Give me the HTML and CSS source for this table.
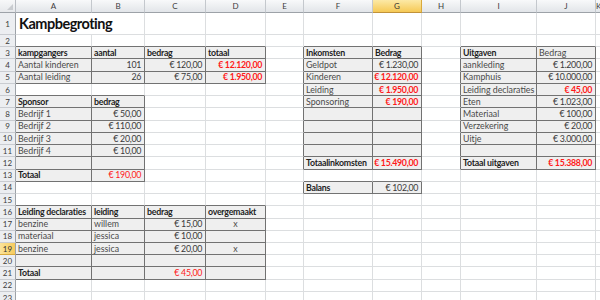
FILE: index.html
```html
<!DOCTYPE html>
<html lang="nl">
<head>
<meta charset="utf-8">
<title>Kampbegroting</title>
<link rel="stylesheet" href="styles.css">
</head>
<body>
<div class="sheet">
  <!-- column headers -->
  <div class="corner"><span class="tri"></span></div>
  <div class="h">A</div><div class="h">B</div><div class="h">C</div><div class="h">D</div><div class="h">E</div>
  <div class="h">F</div><div class="h hs">G</div><div class="h">H</div><div class="h">I</div><div class="h">J</div><div class="h">K</div>

  <!-- row 1 -->
  <div class="r">1</div>
  <div class="c title">Kampbegroting</div>
  <div class="c"></div><div class="c"></div><div class="c"></div><div class="c"></div><div class="c"></div><div class="c"></div><div class="c"></div><div class="c"></div><div class="c"></div>

  <!-- row 2 -->
  <div class="r">2</div>
  <div class="c eb"></div><div class="c eb"></div><div class="c eb"></div><div class="c eb"></div>
  <div class="c"></div><div class="c eb"></div><div class="c eb"></div><div class="c"></div><div class="c eb"></div><div class="c eb"></div><div class="c"></div>

  <!-- row 3 -->
  <div class="r">3</div>
  <div class="c d b">kampgangers</div><div class="c d b">aantal</div><div class="c d b">bedrag</div><div class="c d b">totaal</div>
  <div class="c er"></div>
  <div class="c d b">Inkomsten</div><div class="c d b">Bedrag</div>
  <div class="c er"></div>
  <div class="c d b">Uitgaven</div><div class="c d">Bedrag</div>
  <div class="c"></div>

  <!-- row 4 -->
  <div class="r">4</div>
  <div class="c d">Aantal kinderen</div><div class="c d n">101</div><div class="c d n">€&nbsp;120,00</div><div class="c d n red b">€&nbsp;12.120,00</div>
  <div class="c er"></div>
  <div class="c d">Geldpot</div><div class="c d n">€&nbsp;1.230,00</div>
  <div class="c er"></div>
  <div class="c d">aankleding</div><div class="c d n">€&nbsp;1.200,00</div>
  <div class="c"></div>

  <!-- row 5 -->
  <div class="r">5</div>
  <div class="c d">Aantal leiding</div><div class="c d n">26</div><div class="c d n">€&nbsp;75,00</div><div class="c d n red b">€&nbsp;1.950,00</div>
  <div class="c er"></div>
  <div class="c d">Kinderen</div><div class="c d n red b">€&nbsp;12.120,00</div>
  <div class="c er"></div>
  <div class="c d">Kamphuis</div><div class="c d n">€&nbsp;10.000,00</div>
  <div class="c"></div>

  <!-- row 6 -->
  <div class="r">6</div>
  <div class="c eb"></div><div class="c eb"></div><div class="c"></div><div class="c"></div>
  <div class="c er"></div>
  <div class="c d">Leiding</div><div class="c d n red b">€&nbsp;1.950,00</div>
  <div class="c er"></div>
  <div class="c d">Leiding declaraties</div><div class="c d n red b">€&nbsp;45,00</div>
  <div class="c"></div>

  <!-- row 7 -->
  <div class="r">7</div>
  <div class="c d b">Sponsor</div><div class="c d b">bedrag</div><div class="c"></div><div class="c"></div>
  <div class="c er"></div>
  <div class="c d">Sponsoring</div><div class="c d n red b">€&nbsp;190,00</div>
  <div class="c er"></div>
  <div class="c d">Eten</div><div class="c d n">€&nbsp;1.023,00</div>
  <div class="c"></div>

  <!-- row 8 -->
  <div class="r">8</div>
  <div class="c d">Bedrijf 1</div><div class="c d n">€&nbsp;50,00</div><div class="c"></div><div class="c"></div>
  <div class="c er"></div>
  <div class="c d"></div><div class="c d"></div>
  <div class="c er"></div>
  <div class="c d">Materiaal</div><div class="c d n">€&nbsp;100,00</div>
  <div class="c"></div>

  <!-- row 9 -->
  <div class="r">9</div>
  <div class="c d">Bedrijf 2</div><div class="c d n">€&nbsp;110,00</div><div class="c"></div><div class="c"></div>
  <div class="c er"></div>
  <div class="c d"></div><div class="c d"></div>
  <div class="c er"></div>
  <div class="c d">Verzekering</div><div class="c d n">€&nbsp;20,00</div>
  <div class="c"></div>

  <!-- row 10 -->
  <div class="r">10</div>
  <div class="c d">Bedrijf 3</div><div class="c d n">€&nbsp;20,00</div><div class="c"></div><div class="c"></div>
  <div class="c er"></div>
  <div class="c d"></div><div class="c d"></div>
  <div class="c er"></div>
  <div class="c d">Uitje</div><div class="c d n">€&nbsp;3.000,00</div>
  <div class="c"></div>

  <!-- row 11 -->
  <div class="r">11</div>
  <div class="c d">Bedrijf 4</div><div class="c d n">€&nbsp;10,00</div><div class="c"></div><div class="c"></div>
  <div class="c er"></div>
  <div class="c d"></div><div class="c d"></div>
  <div class="c er"></div>
  <div class="c d"></div><div class="c d"></div>
  <div class="c"></div>

  <!-- row 12 -->
  <div class="r">12</div>
  <div class="c d"></div><div class="c d"></div><div class="c"></div><div class="c"></div>
  <div class="c er"></div>
  <div class="c d b">Totaalinkomsten</div><div class="c d n red b">€&nbsp;15.490,00</div>
  <div class="c er"></div>
  <div class="c d b">Totaal uitgaven</div><div class="c d n red b">€&nbsp;15.388,00</div>
  <div class="c"></div>

  <!-- row 13 -->
  <div class="r">13</div>
  <div class="c d b">Totaal</div><div class="c d n red">€&nbsp;190,00</div><div class="c"></div><div class="c"></div>
  <div class="c"></div>
  <div class="c eb"></div><div class="c eb"></div>
  <div class="c"></div><div class="c"></div><div class="c"></div><div class="c"></div>

  <!-- row 14 -->
  <div class="r">14</div>
  <div class="c"></div><div class="c"></div><div class="c"></div><div class="c"></div>
  <div class="c er"></div>
  <div class="c d b">Balans</div><div class="c d n">€&nbsp;102,00</div>
  <div class="c"></div><div class="c"></div><div class="c"></div><div class="c"></div>

  <!-- row 15 -->
  <div class="r">15</div>
  <div class="c eb"></div><div class="c eb"></div><div class="c eb"></div><div class="c eb"></div>
  <div class="c"></div><div class="c"></div><div class="c"></div><div class="c"></div><div class="c"></div><div class="c"></div><div class="c"></div>

  <!-- row 16 -->
  <div class="r">16</div>
  <div class="c d b">Leiding declaraties</div><div class="c d b">leiding</div><div class="c d b">bedrag</div><div class="c d b">overgemaakt</div>
  <div class="c"></div><div class="c"></div><div class="c"></div><div class="c"></div><div class="c"></div><div class="c"></div><div class="c"></div>

  <!-- row 17 -->
  <div class="r">17</div>
  <div class="c d">benzine</div><div class="c d">willem</div><div class="c d n">€&nbsp;15,00</div><div class="c d ctr">x</div>
  <div class="c"></div><div class="c"></div><div class="c"></div><div class="c"></div><div class="c"></div><div class="c"></div><div class="c"></div>

  <!-- row 18 -->
  <div class="r">18</div>
  <div class="c d">materiaal</div><div class="c d">jessica</div><div class="c d n">€&nbsp;10,00</div><div class="c d ctr"></div>
  <div class="c"></div><div class="c"></div><div class="c"></div><div class="c"></div><div class="c"></div><div class="c"></div><div class="c"></div>

  <!-- row 19 -->
  <div class="r rs">19</div>
  <div class="c d">benzine</div><div class="c d">jessica</div><div class="c d n">€&nbsp;20,00</div><div class="c d ctr">x</div>
  <div class="c"></div><div class="c"></div><div class="c"></div><div class="c"></div><div class="c"></div><div class="c"></div><div class="c"></div>

  <!-- row 20 -->
  <div class="r">20</div>
  <div class="c d"></div><div class="c d"></div><div class="c d"></div><div class="c d"></div>
  <div class="c"></div><div class="c"></div><div class="c"></div><div class="c"></div><div class="c"></div><div class="c"></div><div class="c"></div>

  <!-- row 21 -->
  <div class="r">21</div>
  <div class="c d b">Totaal</div><div class="c d"></div><div class="c d n red">€&nbsp;45,00</div><div class="c d"></div>
  <div class="c"></div><div class="c"></div><div class="c"></div><div class="c"></div><div class="c"></div><div class="c"></div><div class="c"></div>

  <!-- row 22 -->
  <div class="r">22</div>
  <div class="c"></div><div class="c"></div><div class="c"></div><div class="c"></div><div class="c"></div><div class="c"></div><div class="c"></div><div class="c"></div><div class="c"></div><div class="c"></div><div class="c"></div>

  <!-- row 23 -->
  <div class="r">23</div>
  <div class="c"></div><div class="c"></div><div class="c"></div><div class="c"></div><div class="c"></div><div class="c"></div><div class="c"></div><div class="c"></div><div class="c"></div><div class="c"></div><div class="c"></div>
</div>
</body>
</html>
```

FILE: styles.css
```css
html, body {
  margin: 0;
  padding: 0;
  background: #ffffff;
  overflow: hidden;
}

.sheet {
  width: 600px;
  height: 300px;
  overflow: hidden;
  display: grid;
  grid-template-columns: 16px 76px 53px 61px 60px 38px 69px 49px 39px 76px 59px 1fr;
  grid-template-rows: 13px 22px repeat(22, 12.24px);
  font-family: "Lato", "Open Sans", sans-serif;
  font-size: 8.8px;
  color: #4a4a4a;
}

.sheet > div {
  box-sizing: border-box;
  min-width: 0;
  white-space: nowrap;
  overflow: hidden;
}

/* corner */
.corner {
  background: linear-gradient(#f7f8f9, #e6e8eb);
  border-right: 1px solid #b9bdc3;
  border-bottom: 1px solid #9da2a8;
  display: flex;
  align-items: flex-end;
  justify-content: flex-end;
  padding: 0 2px 2px 0;
}
.tri {
  width: 0;
  height: 0;
  border-left: 6px solid transparent;
  border-bottom: 6px solid #c9ccd0;
}

/* column headers */
.h {
  background: linear-gradient(#f8f9fa, #e2e5e9);
  border-right: 1px solid #c4c8cd;
  border-bottom: 1px solid #9da2a8;
  color: #3c3c3c;
  font-size: 8px;
  line-height: 12px;
  text-align: center;
}
.hs {
  background: linear-gradient(#fce9a6, #f6c955);
  border-right-color: #d9a93c;
  border-bottom-color: #c1923a;
  color: #333;
}

/* row headers */
.r {
  background: #eceef1;
  border-right: 1px solid #9da2a8;
  border-bottom: 1px solid #c9ccd1;
  color: #3c3c3c;
  font-size: 8px;
  display: flex;
  align-items: center;
  justify-content: center;
}
.rs {
  background: linear-gradient(90deg, #fbe39a, #f6cb5c);
  border-bottom-color: #d9a93c;
  color: #333;
}

/* cells */
.c {
  border-right: 1px solid #dcdee0;
  border-bottom: 1px solid #dcdee0;
  padding: 1px 2px 0 2px;
  display: flex;
  align-items: center;
  line-height: 1;
}
.title {
  grid-column: span 2;
  font-size: 14.5px;
  font-weight: 700;
  letter-spacing: -0.5px;
  color: #111;
  align-items: flex-end;
  padding: 0 0 3px 3px;
}
.d {
  background: #efefef;
  border-right-color: #727272;
  border-bottom-color: #727272;
}
.eb {
  border-bottom-color: #727272;
}
.er {
  border-right-color: #727272;
}
.b {
  font-weight: 700;
  color: #1e1e1e;
  letter-spacing: -0.25px;
}
.n {
  justify-content: flex-end;
  padding-right: 3px;
  color: #3a3a3a;
  letter-spacing: -0.3px;
}
.red {
  color: #ff1a1a;
}
.ctr {
  justify-content: center;
}
```
